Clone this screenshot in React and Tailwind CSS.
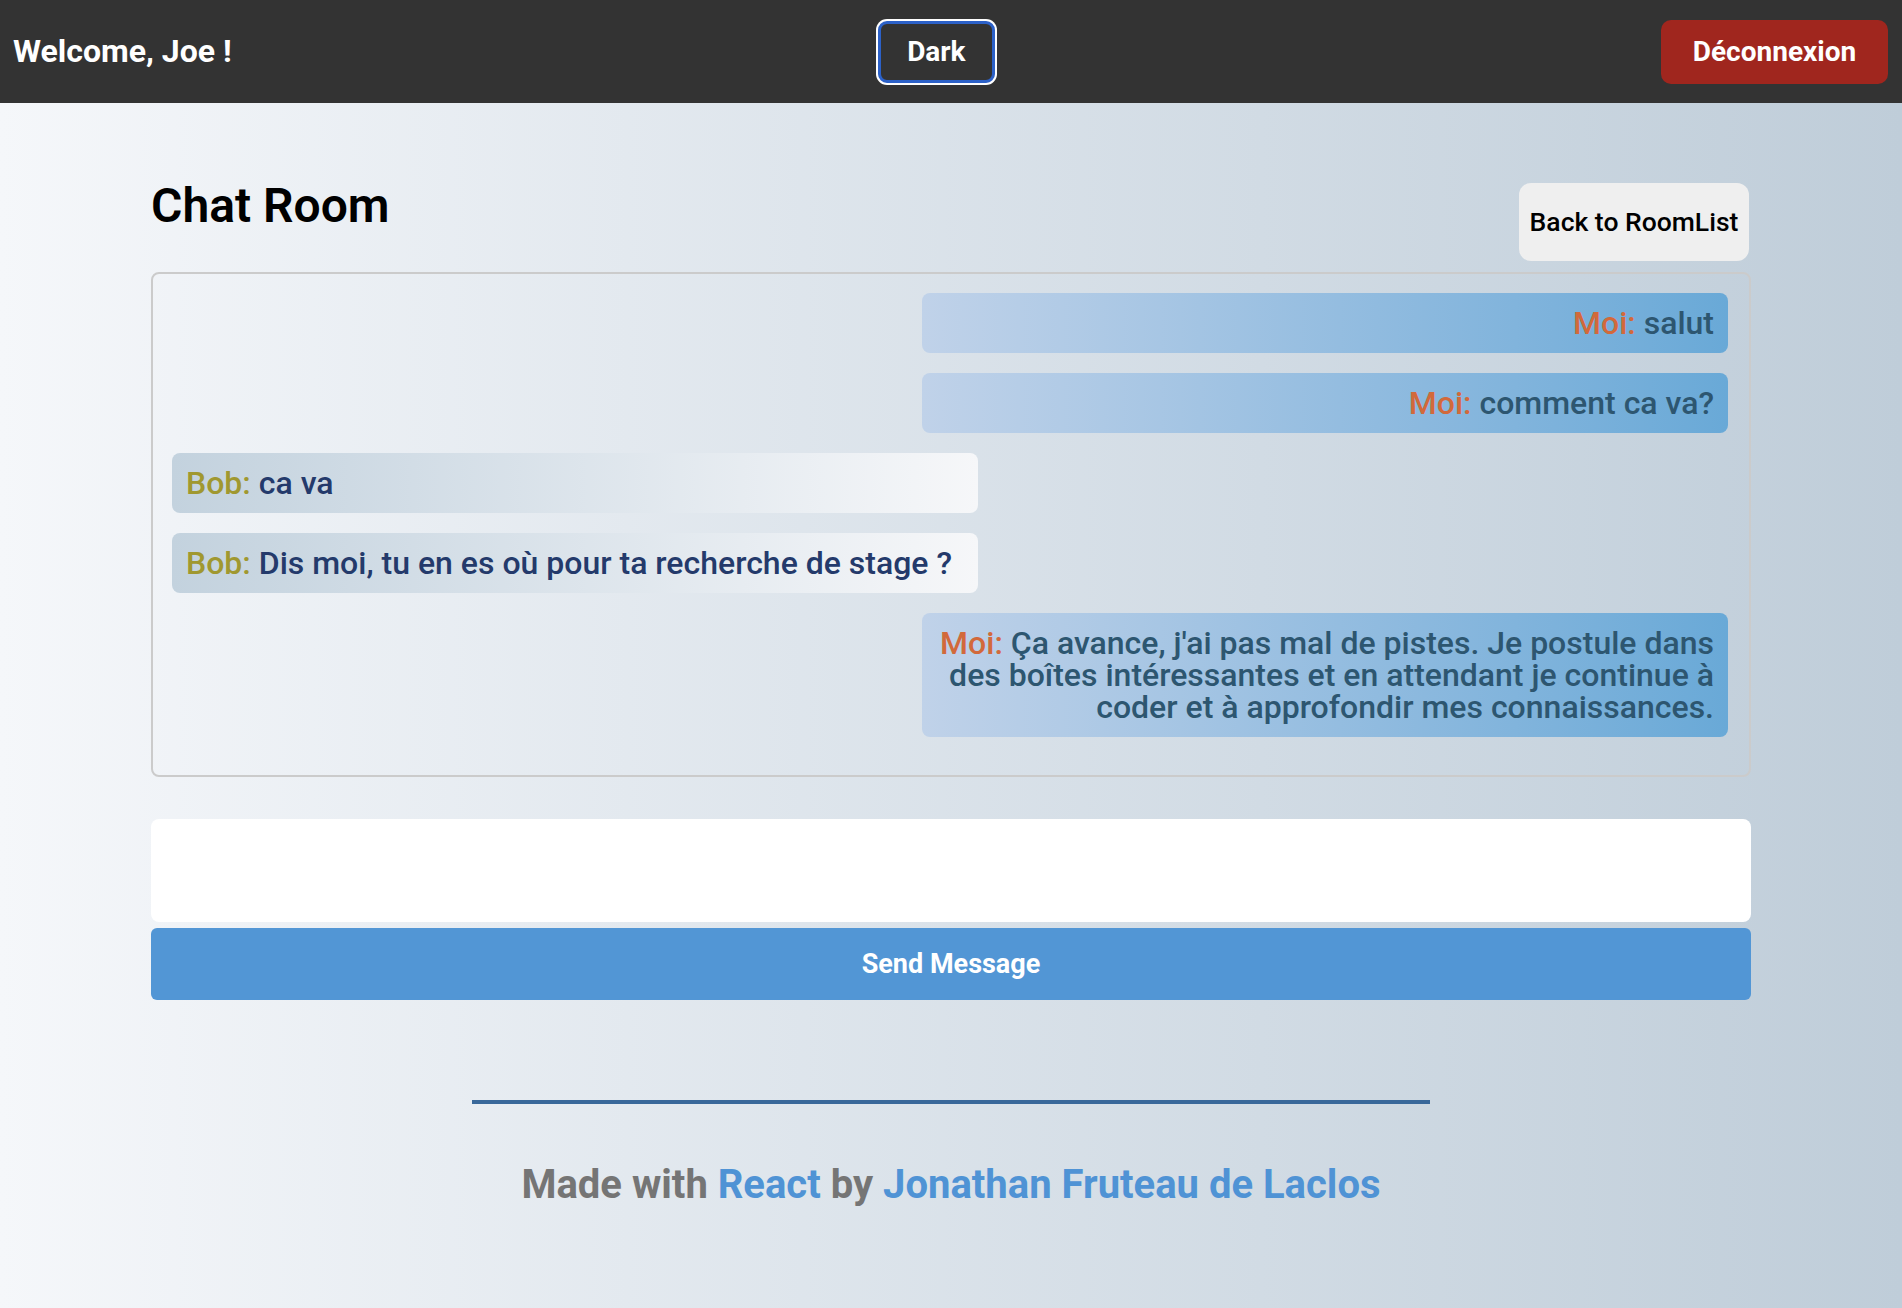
export default function App() {
  const font = { fontFamily: "Roboto, 'Noto Sans', sans-serif" };
  const messages = [
    { me: true, text: "salut" },
    { me: true, text: "comment ca va?" },
    { me: false, text: "ca va" },
    { me: false, text: "Dis moi, tu en es où pour ta recherche de stage ?" },
    {
      me: true,
      text: "Ça avance, j'ai pas mal de pistes. Je postule dans des boîtes intéressantes et en attendant je continue à coder et à approfondir mes connaissances.",
    },
  ];
  return (
    <div
      className="min-h-screen bg-gradient-to-r from-[#f5f7fa] to-[#bfcdd9]"
      style={font}
    >
      <header className="h-[103px] bg-[#333333] flex items-center justify-between pl-[13px] pr-[14px]">
        <span className="text-white font-bold text-[32px] leading-[37px]">Welcome, Joe !</span>
        <button className="h-[62px] px-[26px] rounded-[9px] bg-[#333333] border-[3px] border-[#2c61c8] shadow-[0_0_0_2px_#ffffff] text-white font-bold text-[28px] leading-[33px]">
          Dark
        </button>
        <div className="ml-5">
          <button className="h-[64px] w-[227px] rounded-[10px] bg-[#a0261e] text-white font-bold text-[28px] leading-[33px]">
            Déconnexion
          </button>
        </div>
      </header>

      <main className="w-[1600px] mx-auto pt-[75px]">
        <div className="flex justify-between items-start">
          <h1 className="text-[48px] leading-[55px] font-semibold text-black">Chat Room</h1>
          <button className="mt-[5px] h-[78px] w-[230px] rounded-[12px] bg-[#efefef] text-black font-medium text-[26.5px] leading-[30px] mr-[2px]">
            Back to RoomList
          </button>
        </div>

        <div className="mt-[11px] border-2 border-[#cbcbcb] rounded-[8px] pl-[19px] pr-[21px] pt-[19px] pb-[38px] flex flex-col gap-5">
          {messages.map((m, i) =>
            m.me ? (
              <div
                key={i}
                className="self-end box-content w-1/2 px-[14px] py-[14px] rounded-[8px] bg-gradient-to-r from-[#c0d2e9] to-[#69a9d7] text-right text-[32px] leading-[32px] font-medium text-[#2d5670]"
              >
                <span className="text-[#d2693b]">Moi:</span> {m.text}
              </div>
            ) : (
              <div
                key={i}
                className="self-start box-content w-1/2 px-[14px] py-[14px] rounded-[8px] bg-gradient-to-r from-[#c3d2de] to-[#f6f7f9] text-left text-[32px] leading-[32px] font-medium text-[#243a6b]"
              >
                <span className="text-[#a09830]">Bob:</span> {m.text}
              </div>
            )
          )}
        </div>

        <div className="mt-[42px] h-[103px] bg-white rounded-[8px]"></div>
        <button className="mt-[6px] h-[72px] w-full rounded-[6px] bg-[#5296d5] text-white font-bold text-[27px] leading-[32px]">
          Send Message
        </button>
      </main>

      <footer className="pt-[100px] pb-[100px]">
        <div className="w-[958px] h-[4px] bg-[#39689a] mx-auto"></div>
        <p className="mt-[57px] text-center font-bold text-[40px] leading-[47px] text-[#757575]">
          Made with <span className="text-[#4f93d5]">React</span> by{" "}
          <span className="text-[#4f93d5]">Jonathan Fruteau de Laclos</span>
        </p>
      </footer>
    </div>
  );
}
